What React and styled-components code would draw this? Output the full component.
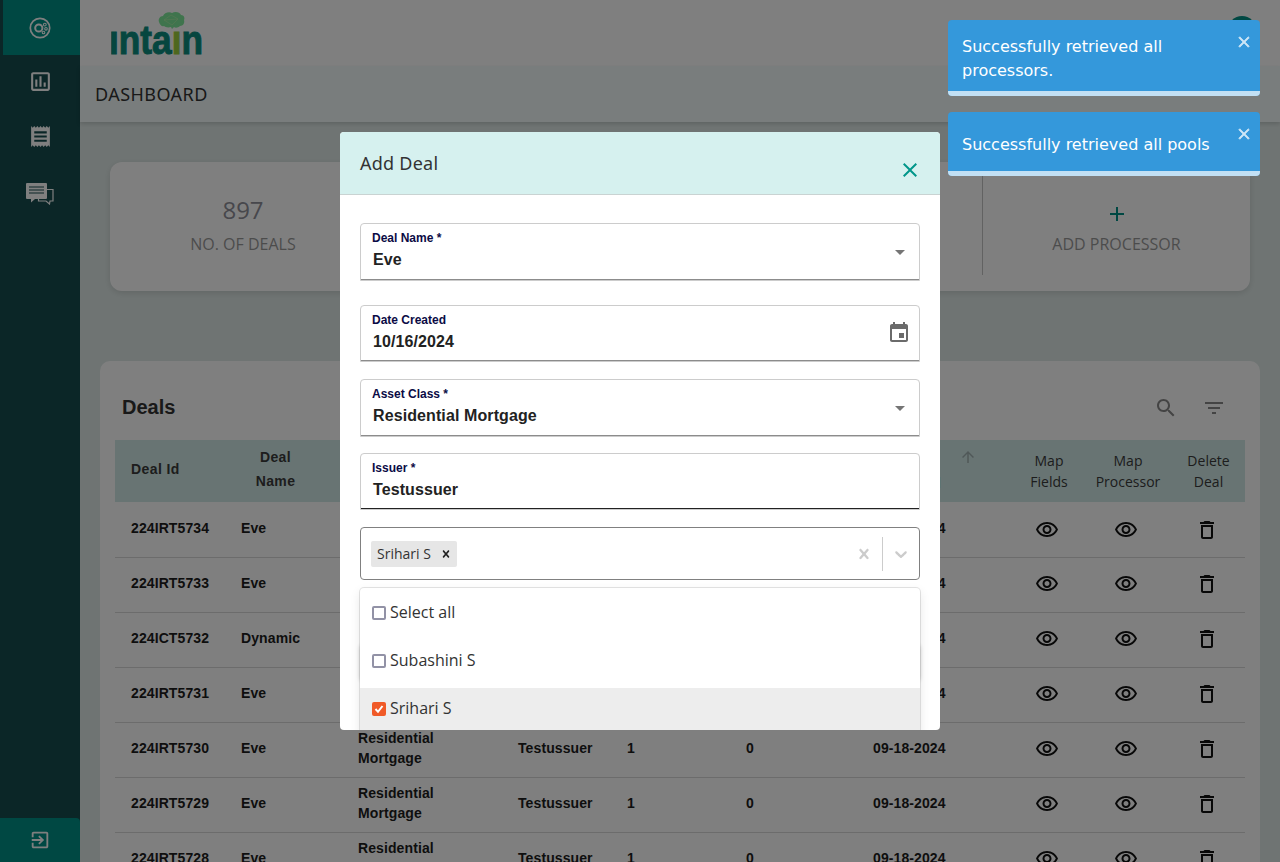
import React from "react";
import styled, { createGlobalStyle } from "styled-components";

const GlobalStyle = createGlobalStyle`
  html, body {
    margin: 0;
    padding: 0;
    height: 100%;
    overflow: hidden;
    font-family: "Open Sans", "Noto Sans", sans-serif;
  }
  * { box-sizing: border-box; }
`;

const ICONS = {
  eye: "M12 6c3.79 0 7.17 2.13 8.82 5.5C19.17 14.87 15.79 17 12 17s-7.17-2.13-8.82-5.5C4.83 8.13 8.21 6 12 6m0-2C7 4 2.73 7.11 1 11.5 2.73 15.89 7 19 12 19s9.27-3.11 11-7.5C21.27 7.11 17 4 12 4zm0 5c1.38 0 2.5 1.12 2.5 2.5S13.38 14 12 14s-2.5-1.12-2.5-2.5S10.62 9 12 9m0-2c-2.48 0-4.5 2.02-4.5 4.5S9.52 16 12 16s4.5-2.02 4.5-4.5S14.48 7 12 7z",
  trash: "M16 9v10H8V9h8m-1.5-6h-5l-1 1H5v2h14V4h-3.5l-1-1zM18 7H6v12c0 1.1.9 2 2 2h8c1.1 0 2-.9 2-2V7z",
  search: "M15.5 14h-.79l-.28-.27C15.41 12.59 16 11.11 16 9.5 16 5.91 13.09 3 9.5 3S3 5.91 3 9.5 5.91 16 9.5 16c1.61 0 3.09-.59 4.23-1.57l.27.28v.79l5 4.99L20.49 19l-4.99-5zm-6 0C7.01 14 5 11.99 5 9.5S7.01 5 9.5 5 14 7.01 14 9.5 11.99 14 9.5 14z",
  filter: "M10 18h4v-2h-4v2zM3 6v2h18V6H3zm3 7h12v-2H6v2z",
  event: "M17 12h-5v5h5v-5zM16 1v2H8V1H6v2H5c-1.11 0-1.99.9-1.99 2L3 19c0 1.1.89 2 2 2h14c1.1 0 2-.9 2-2V5c0-1.1-.9-2-2-2h-1V1h-2zm3 18H5V8h14v11z",
  receipt: "M18 17H6v-2h12v2zm0-4H6v-2h12v2zm0-4H6V7h12v2zM3 22l1.5-1.5L6 22l1.5-1.5L9 22l1.5-1.5L12 22l1.5-1.5L15 22l1.5-1.5L18 22l1.5-1.5L21 22V2l-1.5 1.5L18 2l-1.5 1.5L15 2l-1.5 1.5L12 2l-1.5 1.5L9 2 7.5 3.5 6 2 4.5 3.5 3 2v20z",
  chart: "M19 3H5c-1.1 0-2 .9-2 2v14c0 1.1.9 2 2 2h14c1.1 0 2-.9 2-2V5c0-1.1-.9-2-2-2zm0 16H5V5h14v14zM7 10h2v7H7zm4-3h2v10h-2zm4 6h2v4h-2z",
  arrowUp: "M4 12l1.41 1.41L11 7.83V20h2V7.83l5.58 5.59L20 12l-8-8-8 8z",
  close: "M19 6.41L17.59 5 12 10.59 6.41 5 5 6.41 10.59 12 5 17.59 6.41 19 12 13.41 17.59 19 19 17.59 13.41 12z",
  add: "M19 13h-6v6h-2v-6H5v-2h6V5h2v6h6v2z",
  dropDown: "M7 10l5 5 5-5z",
  exit: "M10.09 15.59L11.5 17l5-5-5-5-1.41 1.41L12.67 11H3v2h9.67l-2.58 2.59zM19 3H5c-1.11 0-2 .9-2 2v4h2V5h14v14H5v-4H3v4c0 1.1.89 2 2 2h14c1.1 0 2-.9 2-2V5c0-1.1-.9-2-2-2z",
};

const Glyph = styled.svg`
  display: block;
  flex: none;
  width: ${(p) => p.$size || 24}px;
  height: ${(p) => p.$size || 24}px;
  fill: ${(p) => p.$color || "currentColor"};
`;

const Icon = ({ name, size, color }) => (
  <Glyph viewBox="0 0 24 24" $size={size} $color={color}>
    <path d={ICONS[name]} />
  </Glyph>
);

const Page = styled.div`
  position: relative;
  display: flex;
  width: 1280px;
  height: 862px;
  overflow: hidden;
  background: #dfe9e7;
`;

const Sidebar = styled.nav`
  flex: none;
  display: flex;
  flex-direction: column;
  width: 80px;
  background: #164c4e;
  color: #fff;
`;

const NavItem = styled.div`
  display: flex;
  align-items: center;
  justify-content: center;
  height: ${(p) => p.$height || 55}px;
  margin-left: ${(p) => (p.$active ? 3 : 0)}px;
  padding-right: ${(p) => (p.$active ? 3 : 0)}px;
  background: ${(p) => (p.$active ? "#019086" : "transparent")};
`;

const LogoutItem = styled.div`
  display: flex;
  align-items: center;
  justify-content: center;
  height: 44px;
  margin-top: auto;
  background: #019086;
  border-top-right-radius: 4px;
`;

const Main = styled.main`
  flex: 1;
  min-width: 0;
  display: flex;
  flex-direction: column;
`;

const TopBar = styled.header`
  flex: none;
  display: flex;
  align-items: flex-start;
  justify-content: space-between;
  height: 66px;
  padding: 11px 24px 0 31px;
  background: #fff;
`;

const Avatar = styled.div`
  width: 28px;
  height: 28px;
  margin-top: 5px;
  border-radius: 50%;
  background: #019086;
`;

const SubHeader = styled.div`
  flex: none;
  display: flex;
  align-items: center;
  height: 56px;
  padding-left: 15px;
  background: #f3fbfa;
  box-shadow: 0 2px 4px rgba(0, 0, 0, 0.15);
  font-family: "Noto Sans", sans-serif;
  font-size: 18px;
  letter-spacing: 0.45px;
  color: #333;
`;

const StatsCard = styled.section`
  flex: none;
  display: grid;
  grid-template-columns: 266px 303px 303px 268px;
  height: 129px;
  margin: 40px 30px 0;
  padding: 13px 0 16px;
  border-radius: 12px;
  background: #fff;
  box-shadow: 0 2px 6px rgba(0, 0, 0, 0.12);
`;

const StatCell = styled.div`
  display: flex;
  flex-direction: column;
  align-items: center;
  justify-content: center;
  gap: 7px;
  padding: ${(p) => (p.$action ? "6px 0 0" : "0 0 2px")};
  border-left: ${(p) => (p.$divided ? "1px solid #c4c4c4" : "none")};
`;

const StatValue = styled.div`
  font-size: 24px;
  line-height: 33px;
  color: #8f8f99;
`;

const StatLabel = styled.div`
  font-size: 16px;
  line-height: 22px;
  color: #999;
`;

const DealsCard = styled.section`
  flex: none;
  margin: 70px 20px 0;
  padding: 0 15px;
  border-radius: 10px;
  background: #fff;
`;

const DealsHead = styled.div`
  display: flex;
  align-items: center;
  justify-content: space-between;
  height: 79px;
  padding: 14px 19px 0 7px;
`;

const DealsTitle = styled.h2`
  margin: 0;
  font: bold 20px "Liberation Sans", Arial, sans-serif;
  color: #333;
`;

const HeadTools = styled.div`
  display: flex;
  align-items: center;
  gap: 24px;
  color: #888;
`;

const Table = styled.table`
  width: 1130px;
  border-collapse: separate;
  border-spacing: 0;
  table-layout: fixed;
`;

const Col = styled.col`
  width: ${(p) => p.$w}px;
`;

const HeadRow = styled.tr`
  height: 62px;
  background: #d0e9e7;
`;

const Th = styled.th`
  padding-top: 0;
  padding-bottom: ${(p) => (p.$lift ? 4 : 0)}px;
  padding-right: ${(p) => p.$right || 0}px;
  padding-left: ${(p) => (p.$left !== undefined ? p.$left : p.$center ? 0 : 16)}px;
  font: ${(p) =>
    p.$plain
      ? `400 14px/21px "Open Sans", sans-serif`
      : `bold 14px/24px "Liberation Sans", Arial, sans-serif`};
  letter-spacing: ${(p) => (p.$plain ? 0 : 0.4)}px;
  color: #3a3a3a;
  text-align: ${(p) => (p.$center ? "center" : "left")};
`;

const SortLabel = styled.div`
  display: flex;
  justify-content: flex-end;
  padding-right: 33px;
`;

const SortText = styled.div`
  margin-right: 18px;
  text-align: center;
`;

const SortArrow = styled.div`
  margin-top: 1px;
  color: #a0b0b0;
`;

const Row = styled.tr`
  height: 55px;
  &:first-child {
    height: 56px;
  }
`;

const Td = styled.td`
  padding: 0 0 5px 16px;
  border-bottom: 1px solid #d8d8d8;
  font: bold 14px/20px "Liberation Sans", Arial, sans-serif;
  letter-spacing: 0.1px;
  color: #1c1c1c;
  tr:first-child & {
    padding-bottom: 3px;
  }
`;

const IconCell = styled.td`
  padding: 0 0 2px;
  border-bottom: 1px solid #d8d8d8;
  color: #111;
  tr:first-child & {
    padding-bottom: 0;
  }
`;

const IconSlot = styled.div`
  display: flex;
  justify-content: center;
  padding-right: ${(p) => p.$nudge || 0}px;
`;

const Overlay = styled.div`
  position: absolute;
  inset: 0;
  display: flex;
  justify-content: center;
  padding-top: 132px;
  background: rgba(0, 0, 0, 0.5);
`;

const Modal = styled.div`
  width: 600px;
  height: 598px;
  overflow: hidden;
  border-radius: 4px;
  background: #fff;
`;

const ModalHead = styled.div`
  position: relative;
  display: flex;
  align-items: center;
  height: 63px;
  padding: 0 20px;
  background: #d6f1ef;
  border-bottom: 1px solid #c9d3d2;
  font-family: "Noto Sans", sans-serif;
  font-size: 18px;
  letter-spacing: 0.25px;
  color: #333;
`;

const ModalClose = styled.div`
  position: absolute;
  top: 26px;
  right: 18px;
  color: #00968a;
`;

const ModalBody = styled.div`
  padding: 28px 20px;
`;

const Field = styled.div`
  position: relative;
  height: ${(p) => p.$h}px;
  margin-bottom: ${(p) => p.$gap}px;
  padding: 7px 11px 0;
  border: 1px solid #ccc;
  border-radius: 4px 4px 0 0;
  box-shadow: inset 0 -1px 0 ${(p) => (p.$focus ? "#222" : "#8c8c8c")};
  font-family: "Liberation Sans", Arial, sans-serif;
`;

const FieldLabel = styled.div`
  font-size: 12px;
  font-weight: bold;
  line-height: 14px;
  color: #0b0b45;
`;

const FieldValue = styled.div`
  margin: 5px 0 0 1px;
  font-size: 16px;
  font-weight: bold;
  line-height: 20px;
  letter-spacing: 0.1px;
  color: #222;
`;

const FieldAdornment = styled.div`
  position: absolute;
  top: ${(p) => p.$top}px;
  right: ${(p) => p.$right}px;
  color: ${(p) => p.$color};
`;

const MultiWrap = styled.div`
  position: relative;
`;

const MultiControl = styled.div`
  display: flex;
  align-items: center;
  height: 53px;
  padding: 0 8px 0 10px;
  border: 1px solid #808080;
  border-radius: 4px;
`;

const Chip = styled.div`
  display: flex;
  align-items: center;
  height: 26px;
  padding: 0 4px 0 6px;
  border-radius: 2px;
  background: #e6e6e6;
  font-size: 14px;
  color: #333;
`;

const ChipRemove = styled.div`
  margin-left: 8px;
  color: #222;
`;

const MultiTools = styled.div`
  display: flex;
  align-items: center;
  margin-left: auto;
  color: #ccc;
`;

const ToolDivider = styled.div`
  width: 1px;
  height: 34px;
  margin: 0 8px;
  background: #ccc;
`;

const Menu = styled.div`
  position: absolute;
  top: 61px;
  left: 0;
  right: 0;
  padding-top: 4px;
  border-radius: 4px;
  background: #fff;
  box-shadow: 0 0 0 1px rgba(0, 0, 0, 0.1), 0 4px 11px rgba(0, 0, 0, 0.1);
`;

const MenuRow = styled.div`
  display: flex;
  align-items: center;
  gap: 4px;
  height: 48px;
  padding: 0 0 8px 12px;
  background: ${(p) => (p.$selected ? "#ededed" : "transparent")};
  font-size: 16px;
  color: #333;
`;

const Check = styled.div`
  display: flex;
  align-items: center;
  justify-content: center;
  width: 14px;
  height: 14px;
  margin-top: 1px;
  border-radius: 2px;
  border: ${(p) => (p.$on ? "none" : "2px solid #9292a6")};
  background: ${(p) => (p.$on ? "#f05a28" : "#fff")};
`;

const NextField = styled.div`
  height: 36px;
  margin-top: 64px;
  border-radius: 4px;
  box-shadow: 0 1px 4px rgba(0, 0, 0, 0.2);
`;

const ToastStack = styled.div`
  position: absolute;
  top: 20px;
  right: 20px;
  display: flex;
  flex-direction: column;
  gap: 16px;
  width: 312px;
`;

const Toast = styled.div`
  position: relative;
  display: flex;
  align-items: center;
  min-height: 64px;
  padding: 15px 44px 13px 14px;
  border-radius: 4px;
  overflow: hidden;
  background: #3498db;
  font: 16px/24px "DejaVu Sans", Verdana, sans-serif;
  color: #fff;
`;

const ToastClose = styled.div`
  position: absolute;
  top: 13px;
  right: 7px;
  color: #fff;
  opacity: 0.75;
  svg {
    stroke: currentColor;
    stroke-width: 1;
  }
`;

const ToastBar = styled.div`
  position: absolute;
  left: 0;
  right: 0;
  bottom: 0;
  height: 5px;
  background: rgba(255, 255, 255, 0.7);
`;

const columns = [110, 117, 160, 109, 119, 127, 153, 78, 80, 77];

const deals = [
  ["224IRT5734", "Eve"],
  ["224IRT5733", "Eve"],
  ["224ICT5732", "Dynamic"],
  ["224IRT5731", "Eve"],
  ["224IRT5730", "Eve"],
  ["224IRT5729", "Eve"],
  ["224IRT5728", "Eve"],
];

const Logo = () => (
  <svg width="92" height="44" viewBox="0 0 92 44">
    <path
      d="M48 11c-1-3 1-6 4-6 1-3 6-5 9-3 3-2 8-1 9 2 3 0 4 3 3 5 1 3-1 6-4 6-2 2-5 2-6 1l-2 2-1-2c-3 1-6 0-7-1-2 1-4-1-5-4z"
      fill="#7fe89a"
    />
    <path d="M60 4l-7 5 8 5 6-6-7-4zM53 9l14-1" fill="none" stroke="#b4f0a8" strokeWidth="0.6" />
    <text
      x="-2"
      y="43"
      textLength="94"
      lengthAdjust="spacingAndGlyphs"
      fontFamily="Liberation Sans, Arial, sans-serif"
      fontWeight="bold"
      fontSize="40"
      fill="#0c8d7f"
      stroke="#0c8d7f"
      strokeWidth="1"
    >
      ınta<tspan fill="#9ccf3c" stroke="#9ccf3c">ı</tspan>n
    </text>
  </svg>
);

const DonutIcon = () => (
  <svg width="24" height="24" viewBox="0 0 24 24" fill="none" stroke="#fff">
    <circle cx="12" cy="12" r="9.7" strokeWidth="1.7" />
    <circle cx="10.8" cy="12" r="3.6" strokeWidth="2" />
    <circle cx="16.8" cy="8.6" r="1.4" strokeWidth="1.1" />
    <circle cx="18" cy="12.8" r="1.3" strokeWidth="1.1" />
    <circle cx="15.5" cy="16.5" r="1.3" strokeWidth="1.1" />
  </svg>
);

const ChatIcon = () => (
  <svg width="28" height="22" viewBox="0 0 28 22">
    <path d="M1 0h19a1 1 0 0 1 1 1v14a1 1 0 0 1-1 1H9l-4 3.5V16H1a1 1 0 0 1-1-1V1a1 1 0 0 1 1-1z" fill="#fff" />
    <path d="M3 4h15M3 7h15M3 10h15" stroke="#164c4e" strokeWidth="1.2" />
    <path d="M21 6.500h6v11.500h-3l-.5 3-3.500-3H12.500v-2" fill="none" stroke="#fff" strokeWidth="1.2" />
  </svg>
);

const SelectChevron = () => (
  <Glyph viewBox="0 0 20 20" $size={20}>
    <path d="M4.516 7.548c0.436-0.446 1.043-0.481 1.576 0l3.908 3.747 3.908-3.747c0.533-0.481 1.141-0.446 1.574 0 0.436 0.445 0.408 1.197 0 1.615-0.406 0.418-4.695 4.502-4.695 4.502-0.217 0.223-0.502 0.335-0.787 0.335s-0.57-0.112-0.789-0.335c0 0-4.287-4.084-4.695-4.502s-0.436-1.17 0-1.615z" />
  </Glyph>
);

const SelectClear = ({ size }) => (
  <Glyph viewBox="0 0 20 20" $size={size}>
    <path d="M14.348 14.849c-0.469 0.469-1.229 0.469-1.697 0l-2.651-3.030-2.651 3.029c-0.469 0.469-1.229 0.469-1.697 0-0.469-0.469-0.469-1.229 0-1.697l2.758-3.15-2.759-3.152c-0.469-0.469-0.469-1.228 0-1.697s1.228-0.469 1.697 0l2.652 3.031 2.651-3.031c0.469-0.469 1.228-0.469 1.697 0s0.469 1.229 0 1.697l-2.758 3.152 2.758 3.15c0.469 0.469 0.469 1.229 0 1.698z" />
  </Glyph>
);

const CheckMark = () => (
  <svg width="12" height="12" viewBox="0 0 12 12" fill="none" stroke="#fff" strokeWidth="2">
    <path d="M2.500 6l2.500 2.800L9.500 3" />
  </svg>
);

const App = () => {
  return (
    <Page>
      <GlobalStyle />
      <Sidebar>
        <NavItem $active>
          <DonutIcon />
        </NavItem>
        <NavItem $height={52}>
          <Icon name="chart" size={25} color="#fff" />
        </NavItem>
        <NavItem $height={58}>
          <Icon name="receipt" size={25} color="#fff" />
        </NavItem>
        <NavItem $height={57}>
          <ChatIcon />
        </NavItem>
        <LogoutItem>
          <Icon name="exit" size={22} color="#fff" />
        </LogoutItem>
      </Sidebar>

      <Main>
        <TopBar>
          <Logo />
          <Avatar />
        </TopBar>
        <SubHeader>DASHBOARD</SubHeader>

        <StatsCard>
          <StatCell>
            <StatValue>897</StatValue>
            <StatLabel>NO. OF DEALS</StatLabel>
          </StatCell>
          <StatCell $divided />
          <StatCell $divided />
          <StatCell $divided $action>
            <Icon name="add" size={24} color="#019086" />
            <StatLabel>ADD PROCESSOR</StatLabel>
          </StatCell>
        </StatsCard>

        <DealsCard>
          <DealsHead>
            <DealsTitle>Deals</DealsTitle>
            <HeadTools>
              <Icon name="search" />
              <Icon name="filter" />
            </HeadTools>
          </DealsHead>
          <Table>
            <colgroup>
              {columns.map((w, i) => (
                <Col key={i} $w={w} />
              ))}
            </colgroup>
            <thead>
              <HeadRow>
                <Th $lift>Deal Id</Th>
                <Th $center $lift $right={16}>
                  Deal
                  <br />
                  Name
                </Th>
                <Th $lift>Asset Class</Th>
                <Th $lift>Issuer</Th>
                <Th />
                <Th />
                <Th $center>
                  <SortLabel>
                    <SortText>
                      Date
                      <br />
                      of Deal
                    </SortText>
                    <SortArrow>
                      <Icon name="arrowUp" size={18} />
                    </SortArrow>
                  </SortLabel>
                </Th>
                <Th $center $plain>
                  Map
                  <br />
                  Fields
                </Th>
                <Th $center $plain>
                  Map
                  <br />
                  Processor
                </Th>
                <Th $center $plain $left={4}>
                  Delete
                  <br />
                  Deal
                </Th>
              </HeadRow>
            </thead>
            <tbody>
              {deals.map(([id, name]) => (
                <Row key={id}>
                  <Td>{id}</Td>
                  <Td>{name}</Td>
                  <Td>
                    Residential
                    <br />
                    Mortgage
                  </Td>
                  <Td>Testussuer</Td>
                  <Td>1</Td>
                  <Td>0</Td>
                  <Td>09-18-2024</Td>
                  <IconCell>
                    <IconSlot $nudge={4}>
                      <Icon name="eye" />
                    </IconSlot>
                  </IconCell>
                  <IconCell>
                    <IconSlot $nudge={4}>
                      <Icon name="eye" />
                    </IconSlot>
                  </IconCell>
                  <IconCell>
                    <IconSlot>
                      <Icon name="trash" />
                    </IconSlot>
                  </IconCell>
                </Row>
              ))}
            </tbody>
          </Table>
        </DealsCard>
      </Main>

      <Overlay>
        <Modal>
          <ModalHead>
            Add Deal
            <ModalClose>
              <Icon name="close" />
            </ModalClose>
          </ModalHead>
          <ModalBody>
            <Field $h={58} $gap={24}>
              <FieldLabel>Deal Name *</FieldLabel>
              <FieldValue>Eve</FieldValue>
              <FieldAdornment $top={16} $right={7} $color="#757575">
                <Icon name="dropDown" />
              </FieldAdornment>
            </Field>
            <Field $h={57} $gap={17}>
              <FieldLabel>Date Created</FieldLabel>
              <FieldValue>10/16/2024</FieldValue>
              <FieldAdornment $top={15} $right={8} $color="#6b6b6b">
                <Icon name="event" />
              </FieldAdornment>
            </Field>
            <Field $h={58} $gap={16}>
              <FieldLabel>Asset Class *</FieldLabel>
              <FieldValue>Residential Mortgage</FieldValue>
              <FieldAdornment $top={16} $right={7} $color="#757575">
                <Icon name="dropDown" />
              </FieldAdornment>
            </Field>
            <Field $h={57} $gap={17} $focus>
              <FieldLabel>Issuer *</FieldLabel>
              <FieldValue>Testussuer</FieldValue>
            </Field>
            <MultiWrap>
              <MultiControl>
                <Chip>
                  Srihari S
                  <ChipRemove>
                    <SelectClear size={14} />
                  </ChipRemove>
                </Chip>
                <MultiTools>
                  <SelectClear size={20} />
                  <ToolDivider />
                  <SelectChevron />
                </MultiTools>
              </MultiControl>
              <NextField />
              <Menu>
                <MenuRow>
                  <Check />
                  Select all
                </MenuRow>
                <MenuRow>
                  <Check />
                  Subashini S
                </MenuRow>
                <MenuRow $selected>
                  <Check $on>
                    <CheckMark />
                  </Check>
                  Srihari S
                </MenuRow>
              </Menu>
            </MultiWrap>
          </ModalBody>
        </Modal>
      </Overlay>

      <ToastStack>
        <Toast>
          Successfully retrieved all processors.
          <ToastClose>
            <Icon name="close" size={18} />
          </ToastClose>
          <ToastBar />
        </Toast>
        <Toast>
          Successfully retrieved all pools
          <ToastClose>
            <Icon name="close" size={18} />
          </ToastClose>
          <ToastBar />
        </Toast>
      </ToastStack>
    </Page>
  );
};

export default App;
